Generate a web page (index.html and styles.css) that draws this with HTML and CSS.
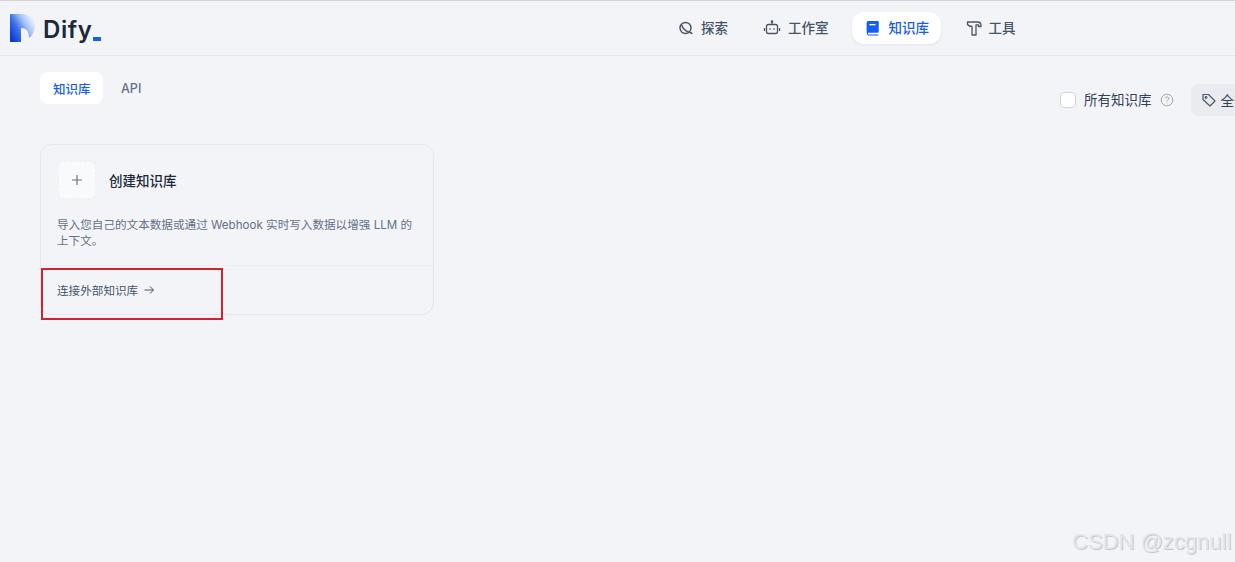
FILE: index.html
```html
<!DOCTYPE html>
<html lang="zh-CN">
<head>
<meta charset="utf-8">
<title>知识库 - Dify</title>
<link rel="stylesheet" href="styles.css">
</head>
<body>
<header class="header">
  <div class="logo">
    <svg class="logo-mark" viewBox="0 0 26 30" width="26" height="30" aria-hidden="true">
      <defs>
        <linearGradient id="lg" x1="0.05" y1="0.9" x2="0.95" y2="0.3">
          <stop offset="0" stop-color="#0a37cf"/>
          <stop offset="0.4" stop-color="#3f72ea"/>
          <stop offset="0.72" stop-color="#a9c4f5"/>
          <stop offset="1" stop-color="#e4ecfb"/>
        </linearGradient>
      </defs>
      <path d="M0 1H12C20 1 25 6 25 13C25 18 23 22 19 25C19 19 17 15 11 15V29H0Z" fill="url(#lg)"/>
    </svg>
    <span class="logo-text">Dify</span><span class="logo-dash"></span>
  </div>
  <nav class="nav">
    <a class="nav-item nav-explore">
      <svg viewBox="0 0 16 16" width="16" height="16" fill="none" stroke="#4b5563" stroke-width="1.400" aria-hidden="true"><circle cx="7.500" cy="8" r="5.500"/><path d="M3.500 4.500C4.500 8 8 11.500 12 12.500Q14 13 14.300 14"/></svg>
      <span>探索</span>
    </a>
    <a class="nav-item nav-studio">
      <svg viewBox="0 0 18 18" width="18" height="18" fill="none" stroke="#4b5563" stroke-width="1.300" aria-hidden="true"><rect x="3.500" y="5.500" width="11" height="9" rx="2"/><path d="M9 5.500V3M1.500 9v3M16.500 9v3M7 9.300v1.500M11 9.300v1.500"/><circle cx="9" cy="2.500" r=".7"/></svg>
      <span>工作室</span>
    </a>
    <a class="nav-item active">
      <svg viewBox="0 0 14 16" width="14" height="16" aria-hidden="true"><path d="M2.500 1H12.500V12.500H2.500A1.200 1.200 0 0 0 2.500 14.500H12.500V15.500H2.500A2 2 0 0 1 .8 13.500V2.800A1.800 1.800 0 0 1 2.500 1Z" fill="#155eef"/><rect x=".8" y="1" width="11.700" height="11.500" rx="1.500" fill="#155eef"/><rect x="3.500" y="4" width="6" height="1.300" fill="#fff"/></svg>
      <span>知识库</span>
    </a>
    <a class="nav-item">
      <svg viewBox="0 0 16 16" width="16" height="16" fill="none" stroke="#4b5563" stroke-width="1.300" stroke-linejoin="round" aria-hidden="true"><path d="M1.500 2H11.500Q15 2 15 5.500V6.500H12.500V4.800H10V15H6V6.500Q3 6.500 1.500 4.500Z"/></svg>
      <span>工具</span>
    </a>
  </nav>
</header>

<main class="main">
  <div class="toolbar">
    <div class="tabs">
      <a class="tab active">知识库</a>
      <a class="tab">API</a>
    </div>
    <div class="filters">
      <span class="checkbox"></span>
      <span class="filter-label">所有知识库</span>
      <svg class="help" viewBox="0 0 14 14" width="14" height="14" fill="none" stroke="#a0a6b1" stroke-width="1" aria-hidden="true"><circle cx="7" cy="7" r="5.800"/><path d="M5.400 5.500A1.700 1.700 0 1 1 7.800 7.100C7.200 7.400 7 7.700 7 8.300M7 9.700v.6"/></svg>
      <div class="tag-btn">
        <svg viewBox="0 0 16 16" width="16" height="16" fill="none" stroke="#4b5563" stroke-width="1.200" stroke-linejoin="round" aria-hidden="true"><path d="M2 2.500H7.500L14 9L9 14L2 7.500Z"/><circle cx="5" cy="5.500" r=".8"/></svg>
        <span>全部标签</span>
      </div>
    </div>
  </div>

  <section class="card">
    <div class="card-body">
      <div class="card-head">
        <span class="plus-box">
          <svg viewBox="0 0 12 12" width="12" height="12" fill="none" stroke="#6b7280" stroke-width="1.200" aria-hidden="true"><path d="M6 1v10M1 6h10"/></svg>
        </span>
        <span class="card-title">创建知识库</span>
      </div>
      <p class="card-desc">导入您自己的文本数据或通过 Webhook 实时写入数据以增强 LLM 的上下文。</p>
    </div>
    <div class="card-foot">
      <span>连接外部知识库</span>
      <svg viewBox="0 0 12 12" width="12" height="12" fill="none" stroke="#4b5563" stroke-width="1" aria-hidden="true"><path d="M1.500 6h9M7 2.500 10.500 6 7 9.500"/></svg>
    </div>
  </section>
</main>

<div class="highlight"></div>
<div class="watermark">CSDN @zcgnull</div>
</body>
</html>
```

FILE: styles.css
```css
* { box-sizing: border-box; }

html, body {
  margin: 0;
  height: 100%;
  overflow: hidden;
}

body {
  position: relative;
  background: #f2f4f8;
  color: #1d2939;
  font-family: Inter, "Noto Sans CJK SC", sans-serif;
  border-top: 1px solid #d4d5d8;
}

.header {
  display: flex;
  align-items: center;
  height: 55px;
  border-bottom: 1px solid #e4e6eb;
  padding-left: 10px;
}

.logo {
  display: flex;
  align-items: center;
  width: 658px;
  flex: none;
}

.logo-text {
  margin: 3px 0 0 7px;
  font-size: 24px;
  font-weight: 600;
  letter-spacing: .6px;
  color: #1d2939;
  line-height: 28px;
}

.logo-dash {
  width: 8px;
  height: 4px;
  background: #155eef;
  align-self: flex-end;
  margin: 0 0 3px 1px;
}

.nav {
  display: flex;
  align-items: center;
}

.nav-item {
  display: flex;
  align-items: center;
  gap: 7px;
  height: 32px;
  padding: 0 12px 0 10px;
  border-radius: 12px;
  font-size: 13.500px;
  line-height: 30px;
  font-weight: 500;
  color: #475467;
  white-space: nowrap;
}

.nav-item span { margin-top: -1px; }

.nav-explore { margin-right: 13px; }
.nav-studio { margin-right: 11px; }

.nav-item.active {
  width: 89px;
  padding: 0 0 0 14px;
  gap: 9px;
  margin-right: 15px;
  background: #fff;
  color: #155eef;
  box-shadow: 0 1px 3px rgba(16, 24, 40, .07);
}

.main {
  padding: 16px 0 0 40px;
}

.toolbar {
  display: flex;
  justify-content: space-between;
  align-items: flex-start;
  height: 72px;
}

.tabs {
  display: flex;
  align-items: center;
  gap: 5px;
}

.tab {
  display: flex;
  align-items: center;
  height: 32px;
  padding: 0 13px;
  border-radius: 8px;
  font-size: 12.500px;
  font-weight: 500;
  color: #667085;
  white-space: nowrap;
}

.tab.active {
  width: 63px;
  padding-right: 0;
  background: #fff;
  color: #155eef;
}

.filters {
  display: flex;
  align-items: center;
  gap: 8px;
  width: 175px;
  flex: none;
  margin-top: 12px;
  white-space: nowrap;
}

.checkbox {
  flex: none;
  width: 16px;
  height: 16px;
  background: #fff;
  border: 1px solid #d0d5dd;
  border-radius: 4px;
}

.filter-label {
  font-size: 13.500px;
  line-height: 30px;
  color: #344054;
}

.help { flex: none; }

.tag-btn {
  flex: none;
  display: flex;
  align-items: center;
  gap: 4px;
  height: 32px;
  margin-left: 9px;
  padding: 0 10px;
  border-radius: 8px;
  background: #e9ebf0;
  font-size: 13.500px;
  color: #344054;
}

.card {
  display: flex;
  flex-direction: column;
  width: 394px;
  height: 171px;
  border: 1px solid #e4e7ec;
  border-radius: 12px;
}

.card-body {
  height: 121px;
  flex: none;
  padding: 17px 16px 0 17px;
  border-bottom: 1px solid #eceef2;
}

.card-head {
  display: flex;
  align-items: center;
  gap: 13px;
  margin-top: -1px;
}

.plus-box {
  display: flex;
  align-items: center;
  justify-content: center;
  width: 38px;
  height: 38px;
  background: #f9fafb;
  border: 1px dashed #eef0f3;
  border-radius: 6px;
}

.card-title {
  font-size: 13.500px;
  font-weight: 500;
  line-height: 16px;
  padding-top: 1px;
  color: #1d2939;
}

.card-desc {
  margin: 18px 0 0 -1px;
  font-size: 11.600px;
  line-height: 16px;
  color: #667085;
}

.card-foot {
  display: flex;
  align-items: center;
  gap: 5px;
  flex: 1;
  padding-left: 16px;
  font-size: 11.600px;
  color: #475467;
}

.highlight {
  position: absolute;
  left: 41px;
  top: 267px;
  width: 182px;
  height: 52px;
  border: 2px solid #d3222f;
  pointer-events: none;
}

.watermark {
  position: absolute;
  left: 1072px;
  top: 527px;
  font-family: "Liberation Sans", sans-serif;
  font-size: 22px;
  line-height: 28px;
  color: #e3e5e9;
  text-shadow: 1px 1px 0 #c6c9ce;
  white-space: nowrap;
}
```
